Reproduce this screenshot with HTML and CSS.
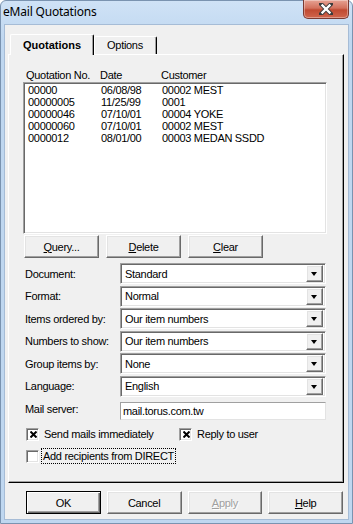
FILE: index.html
```html
<!DOCTYPE html>
<html lang="en">
  <head>
    <meta charset="UTF-8" />
    <title>eMail Quotations</title>
    <link rel="stylesheet" href="styles.css">
  </head>
  <body>
    <div class="window">
      <div class="titlebar">
        <span class="title">eMail Quotations</span>
        <div class="close-btn">
          <svg width="14" height="12" viewBox="0 0 14 12">
            <path d="M2 1 L12 11 M12 1 L2 11" stroke="#3b3b3b" stroke-width="4.2" stroke-linecap="square" />
            <path d="M2.6 1.6 L11.4 10.4 M11.4 1.6 L2.6 10.4" stroke="#ffffff" stroke-width="2.2" />
          </svg>
        </div>
      </div>
      <div class="client">
        <div class="tabs">
          <div class="tab active">Quotations</div>
          <div class="tab">Options</div>
        </div>
        <div class="panel">
          <div class="list-head">
            <span>Quotation No.</span><span>Date</span><span>Customer</span>
          </div>
          <div class="listbox">
            <div class="list-row"><span>00000</span><span>06/08/98</span><span>00002 MEST</span></div>
            <div class="list-row"><span>00000005</span><span>11/25/99</span><span>0001</span></div>
            <div class="list-row"><span>00000046</span><span>07/10/01</span><span>00004 YOKE</span></div>
            <div class="list-row"><span>00000060</span><span>07/10/01</span><span>00002 MEST</span></div>
            <div class="list-row"><span>0000012</span><span>08/01/00</span><span>00003 MEDAN SSDD</span></div>
          </div>
          <div class="list-buttons">
            <button class="btn"><u>Q</u>uery...</button>
            <button class="btn"><u>D</u>elete</button>
            <button class="btn"><u>C</u>lear</button>
          </div>
          <div class="form">
            <label>Document:</label>
            <div class="select"><span>Standard</span><span class="drop"></span></div>
            <label>Format:</label>
            <div class="select"><span>Normal</span><span class="drop"></span></div>
            <label>Items ordered by:</label>
            <div class="select"><span>Our item numbers</span><span class="drop"></span></div>
            <label>Numbers to show:</label>
            <div class="select"><span>Our item numbers</span><span class="drop"></span></div>
            <label>Group items by:</label>
            <div class="select"><span>None</span><span class="drop"></span></div>
            <label>Language:</label>
            <div class="select"><span>English</span><span class="drop"></span></div>
            <label>Mail server:</label>
            <div class="textbox">mail.torus.com.tw</div>
          </div>
          <div class="checks">
            <div class="check-line">
              <div class="check wide">
                <span class="box"><svg width="7" height="7" viewBox="0 0 7 7"><path d="M0.5 0.5 L6.5 6.5 M6.5 0.5 L0.5 6.5" stroke="#000" stroke-width="2" /></svg></span>
                Send mails immediately
              </div>
              <div class="check">
                <span class="box"><svg width="7" height="7" viewBox="0 0 7 7"><path d="M0.5 0.5 L6.5 6.5 M6.5 0.5 L0.5 6.5" stroke="#000" stroke-width="2" /></svg></span>
                Reply to user
              </div>
            </div>
            <div class="check-line">
              <div class="check"><span class="box"></span><span class="focus">Add recipients from DIRECT</span></div>
            </div>
          </div>
        </div>
        <div class="footer">
          <button class="btn default">OK</button>
          <button class="btn">Cancel</button>
          <button class="btn disabled"><u>A</u>pply</button>
          <button class="btn"><u>H</u>elp</button>
        </div>
      </div>
    </div>
  </body>
</html>
```

FILE: styles.css
```css
* {
  margin: 0;
  padding: 0;
  box-sizing: border-box;
}

body {
  font-family: "Liberation Sans", Arial, sans-serif;
  font-size: 11px;
  letter-spacing: -0.3px;
  color: #000;
  background: #ffffff;
}

.window {
  width: 353px;
  height: 524px;
  display: flex;
  flex-direction: column;
  background: linear-gradient(#cfe2f6, #bfd7f0 40px, #bfd7f0);
  border: 1px solid #7a93b0;
  border-radius: 6px 6px 0 0;
}

.titlebar {
  height: 23px;
  display: flex;
  align-items: flex-start;
  justify-content: space-between;
  padding-left: 2px;
}

.title {
  font-family: "Noto Sans", "Open Sans", sans-serif;
  font-size: 12px;
  letter-spacing: -0.2px;
  line-height: 22px;
  color: #000;
}

.close-btn {
  width: 46px;
  height: 19px;
  margin-right: 3px;
  margin-top: -1px;
  border: 1px solid #7a3a32;
  border-top: none;
  border-radius: 0 0 5px 5px;
  background: linear-gradient(#e6a394, #d3715d 45%, #c04a32 55%, #d0664d);
  box-shadow: inset 0 0 0 1px rgba(255, 255, 255, 0.35);
  display: flex;
  align-items: center;
  justify-content: center;
}

.client {
  flex: 1;
  margin: 0 3px 3px;
  background: #f0f0f0;
  border: 1px solid #a6bcd6;
  padding: 9px 5px 0 3px;
  display: flex;
  flex-direction: column;
}

.tabs {
  display: flex;
  padding-left: 2px;
  height: 20px;
  align-items: flex-end;
  position: relative;
  z-index: 1;
}

.tab {
  height: 18px;
  padding: 0 13px 0 12px;
  line-height: 17px;
  font-size: 11px;
  border-left: 1px solid #fff;
  border-top: 1px solid #fff;
  border-right: 1px solid #000;
  box-shadow: inset -1px 0 0 #a0a0a0;
  border-radius: 2px 2px 0 0;
  background: #f0f0f0;
}

.tab.active {
  height: 21px;
  margin-bottom: -1px;
  padding: 0 12px;
  font-weight: bold;
  letter-spacing: 0;
  line-height: 20px;
}

.panel {
  width: 336px;
  height: 429px;
  border: 1px solid;
  border-color: #fff #000 #000 #fff;
  box-shadow: inset -1px -1px 0 #a0a0a0;
  padding: 14px 0 0 14px;
}

.list-head {
  display: grid;
  grid-template-columns: 74px 61px 1fr;
  padding-left: 3px;
  line-height: 13px;
}

.listbox {
  width: 304px;
  height: 152px;
  background: #fff;
  border: 1px solid;
  border-color: #a0a0a0 #fff #fff #a0a0a0;
  box-shadow: inset 1px 1px 0 #696969, inset -1px -1px 0 #e3e3e3;
  padding: 1px 2px;
}

.list-row {
  display: grid;
  grid-template-columns: 73px 61px 1fr;
  height: 12px;
  line-height: 12px;
  padding-left: 2px;
}

.list-buttons {
  display: flex;
  gap: 7px;
  margin-top: 1px;
  padding-left: 1px;
}

.btn {
  width: 75px;
  height: 23px;
  font-family: "Liberation Sans", Arial, sans-serif;
  font-size: 11px;
  letter-spacing: -0.3px;
  color: #000;
  background: #f0f0f0;
  border: 1px solid;
  border-color: #fff #696969 #696969 #fff;
  box-shadow: inset -1px -1px 0 #a0a0a0, inset 1px 1px 0 #e3e3e3;
}

.btn.default {
  border-color: #000;
  box-shadow: inset 1px 1px 0 #fff, inset -1px -1px 0 #696969, inset -2px -2px 0 #a0a0a0;
}

.btn.disabled {
  color: #a0a0a0;
  text-shadow: 1px 1px 0 #fff;
}

.form {
  display: grid;
  grid-template-columns: 97px 206px;
  grid-auto-rows: 21px;
  row-gap: 1.6px;
  margin-top: 5px;
  align-items: center;
}

.form label {
  padding-left: 2px;
}

.select {
  height: 21px;
  display: flex;
  align-items: center;
  justify-content: space-between;
  background: #fff;
  border: 1px solid;
  border-color: #a0a0a0 #fff #fff #a0a0a0;
  box-shadow: inset 1px 1px 0 #696969, inset -1px -1px 0 #e3e3e3;
  padding: 1px 2px 1px 4px;
}

.drop {
  width: 17px;
  height: 17px;
  background: #f0f0f0;
  border: 1px solid;
  border-color: #fff #696969 #696969 #fff;
  box-shadow: inset -1px -1px 0 #a0a0a0, inset 1px 1px 0 #e3e3e3;
  position: relative;
}

.drop::after {
  content: "";
  position: absolute;
  left: 4px;
  top: 6px;
  border-left: 3.5px solid transparent;
  border-right: 3.5px solid transparent;
  border-top: 4px solid #000;
}

.textbox {
  height: 18px;
  align-self: end;
  background: #fff;
  border: 1px solid;
  border-color: #a0a0a0 #e3e3e3 #e3e3e3 #a0a0a0;
  padding-left: 2px;
  line-height: 16px;
}

.checks {
  margin-top: 8px;
  padding-left: 3px;
  display: flex;
  flex-direction: column;
  gap: 9px;
}

.check-line {
  display: flex;
  height: 13px;
  align-items: center;
}

.check {
  display: flex;
  align-items: center;
  gap: 5px;
}

.check.wide {
  width: 153px;
}

.box {
  width: 13px;
  height: 13px;
  background: #fff;
  border: 1px solid;
  border-color: #a0a0a0 #fff #fff #a0a0a0;
  box-shadow: inset 1px 1px 0 #696969, inset -1px -1px 0 #e3e3e3;
  display: flex;
  align-items: center;
  justify-content: center;
}

.box svg {
  margin: 1px 0 0 1px;
}

.focus {
  outline: 1px dotted #000;
  outline-offset: 1px;
  margin-left: -1px;
}

.footer {
  display: flex;
  gap: 6px;
  padding: 8px 0 0 18px;
}
```
